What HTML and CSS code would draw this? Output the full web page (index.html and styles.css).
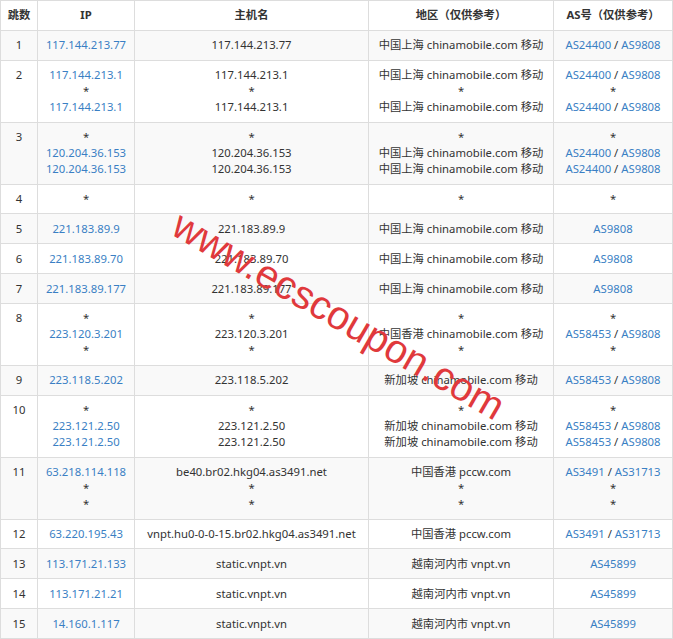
FILE: index.html
```html
<!DOCTYPE html>
<html lang="zh-CN">
<head>
<meta charset="utf-8">
<title>路由追踪</title>
<link rel="stylesheet" href="styles.css">
</head>
<body>
<div class="wrap">
<table class="trace">
<colgroup>
<col class="c-hop"><col class="c-ip"><col class="c-host"><col class="c-geo"><col class="c-as">
</colgroup>
<thead>
<tr><th>跳数</th><th>IP</th><th>主机名</th><th>地区（仅供参考）</th><th>AS号（仅供参考）</th></tr>
</thead>
<tbody>
<tr><td>1</td><td><a>117.144.213.77</a></td><td>117.144.213.77</td><td>中国上海 chinamobile.com 移动</td><td><a>AS24400</a> / <a>AS9808</a></td></tr>
<tr><td>2</td><td><a>117.144.213.1</a><br>*<br><a>117.144.213.1</a></td><td>117.144.213.1<br>*<br>117.144.213.1</td><td>中国上海 chinamobile.com 移动<br>*<br>中国上海 chinamobile.com 移动</td><td><a>AS24400</a> / <a>AS9808</a><br>*<br><a>AS24400</a> / <a>AS9808</a></td></tr>
<tr><td>3</td><td>*<br><a>120.204.36.153</a><br><a>120.204.36.153</a></td><td>*<br>120.204.36.153<br>120.204.36.153</td><td>*<br>中国上海 chinamobile.com 移动<br>中国上海 chinamobile.com 移动</td><td>*<br><a>AS24400</a> / <a>AS9808</a><br><a>AS24400</a> / <a>AS9808</a></td></tr>
<tr><td>4</td><td>*</td><td>*</td><td>*</td><td>*</td></tr>
<tr><td>5</td><td><a>221.183.89.9</a></td><td>221.183.89.9</td><td>中国上海 chinamobile.com 移动</td><td><a>AS9808</a></td></tr>
<tr><td>6</td><td><a>221.183.89.70</a></td><td>221.183.89.70</td><td>中国上海 chinamobile.com 移动</td><td><a>AS9808</a></td></tr>
<tr><td>7</td><td><a>221.183.89.177</a></td><td>221.183.89.177</td><td>中国上海 chinamobile.com 移动</td><td><a>AS9808</a></td></tr>
<tr><td>8</td><td>*<br><a>223.120.3.201</a><br>*</td><td>*<br>223.120.3.201<br>*</td><td>*<br>中国香港 chinamobile.com 移动<br>*</td><td>*<br><a>AS58453</a> / <a>AS9808</a><br>*</td></tr>
<tr><td>9</td><td><a>223.118.5.202</a></td><td>223.118.5.202</td><td>新加坡 chinamobile.com 移动</td><td><a>AS58453</a> / <a>AS9808</a></td></tr>
<tr><td>10</td><td>*<br><a>223.121.2.50</a><br><a>223.121.2.50</a></td><td>*<br>223.121.2.50<br>223.121.2.50</td><td>*<br>新加坡 chinamobile.com 移动<br>新加坡 chinamobile.com 移动</td><td>*<br><a>AS58453</a> / <a>AS9808</a><br><a>AS58453</a> / <a>AS9808</a></td></tr>
<tr><td>11</td><td><a>63.218.114.118</a><br>*<br>*</td><td>be40.br02.hkg04.as3491.net<br>*<br>*</td><td>中国香港 pccw.com<br>*<br>*</td><td><a>AS3491</a> / <a>AS31713</a><br>*<br>*</td></tr>
<tr><td>12</td><td><a>63.220.195.43</a></td><td>vnpt.hu0-0-0-15.br02.hkg04.as3491.net</td><td>中国香港 pccw.com</td><td><a>AS3491</a> / <a>AS31713</a></td></tr>
<tr><td>13</td><td><a>113.171.21.133</a></td><td>static.vnpt.vn</td><td>越南河内市 vnpt.vn</td><td><a>AS45899</a></td></tr>
<tr><td>14</td><td><a>113.171.21.21</a></td><td>static.vnpt.vn</td><td>越南河内市 vnpt.vn</td><td><a>AS45899</a></td></tr>
<tr><td>15</td><td><a>14.160.1.117</a></td><td>static.vnpt.vn</td><td>越南河内市 vnpt.vn</td><td><a>AS45899</a></td></tr>
</tbody>
</table>
<span class="watermark">www.ecscoupon.com</span>
</div>
</body>
</html>
```

FILE: styles.css
```css
html, body {
  margin: 0;
  padding: 0;
  background: #fff;
}
.wrap {
  position: relative;
  width: 672px;
}
.trace {
  width: 672px;
  border-collapse: collapse;
  table-layout: fixed;
  font-family: "Noto Sans", "Noto Sans CJK SC", sans-serif;
  font-size: 11.3px;
  line-height: 16px;
  color: #333;
}
.c-hop { width: 37px; }
.c-ip { width: 97px; }
.c-host { width: 234px; }
.c-geo { width: 185px; }
.c-as { width: 119px; }
.trace th,
.trace td {
  border: 1px solid #ddd;
  padding: 6.45px 2px;
  text-align: center;
  vertical-align: top;
  white-space: nowrap;
}
.trace th {
  font-weight: bold;
  color: #333;
}
.trace tbody tr:nth-child(odd) td {
  background: #f9f9f9;
}
.trace a {
  color: #3a7fc4;
  text-decoration: none;
}
.watermark {
  position: absolute;
  left: 339px;
  top: 315px;
  transform: translate(-50%, -50%) rotate(30deg);
  font-family: "Liberation Sans", sans-serif;
  font-size: 40px;
  line-height: 1;
  color: #e0393c;
  white-space: nowrap;
  pointer-events: none;
}
```
